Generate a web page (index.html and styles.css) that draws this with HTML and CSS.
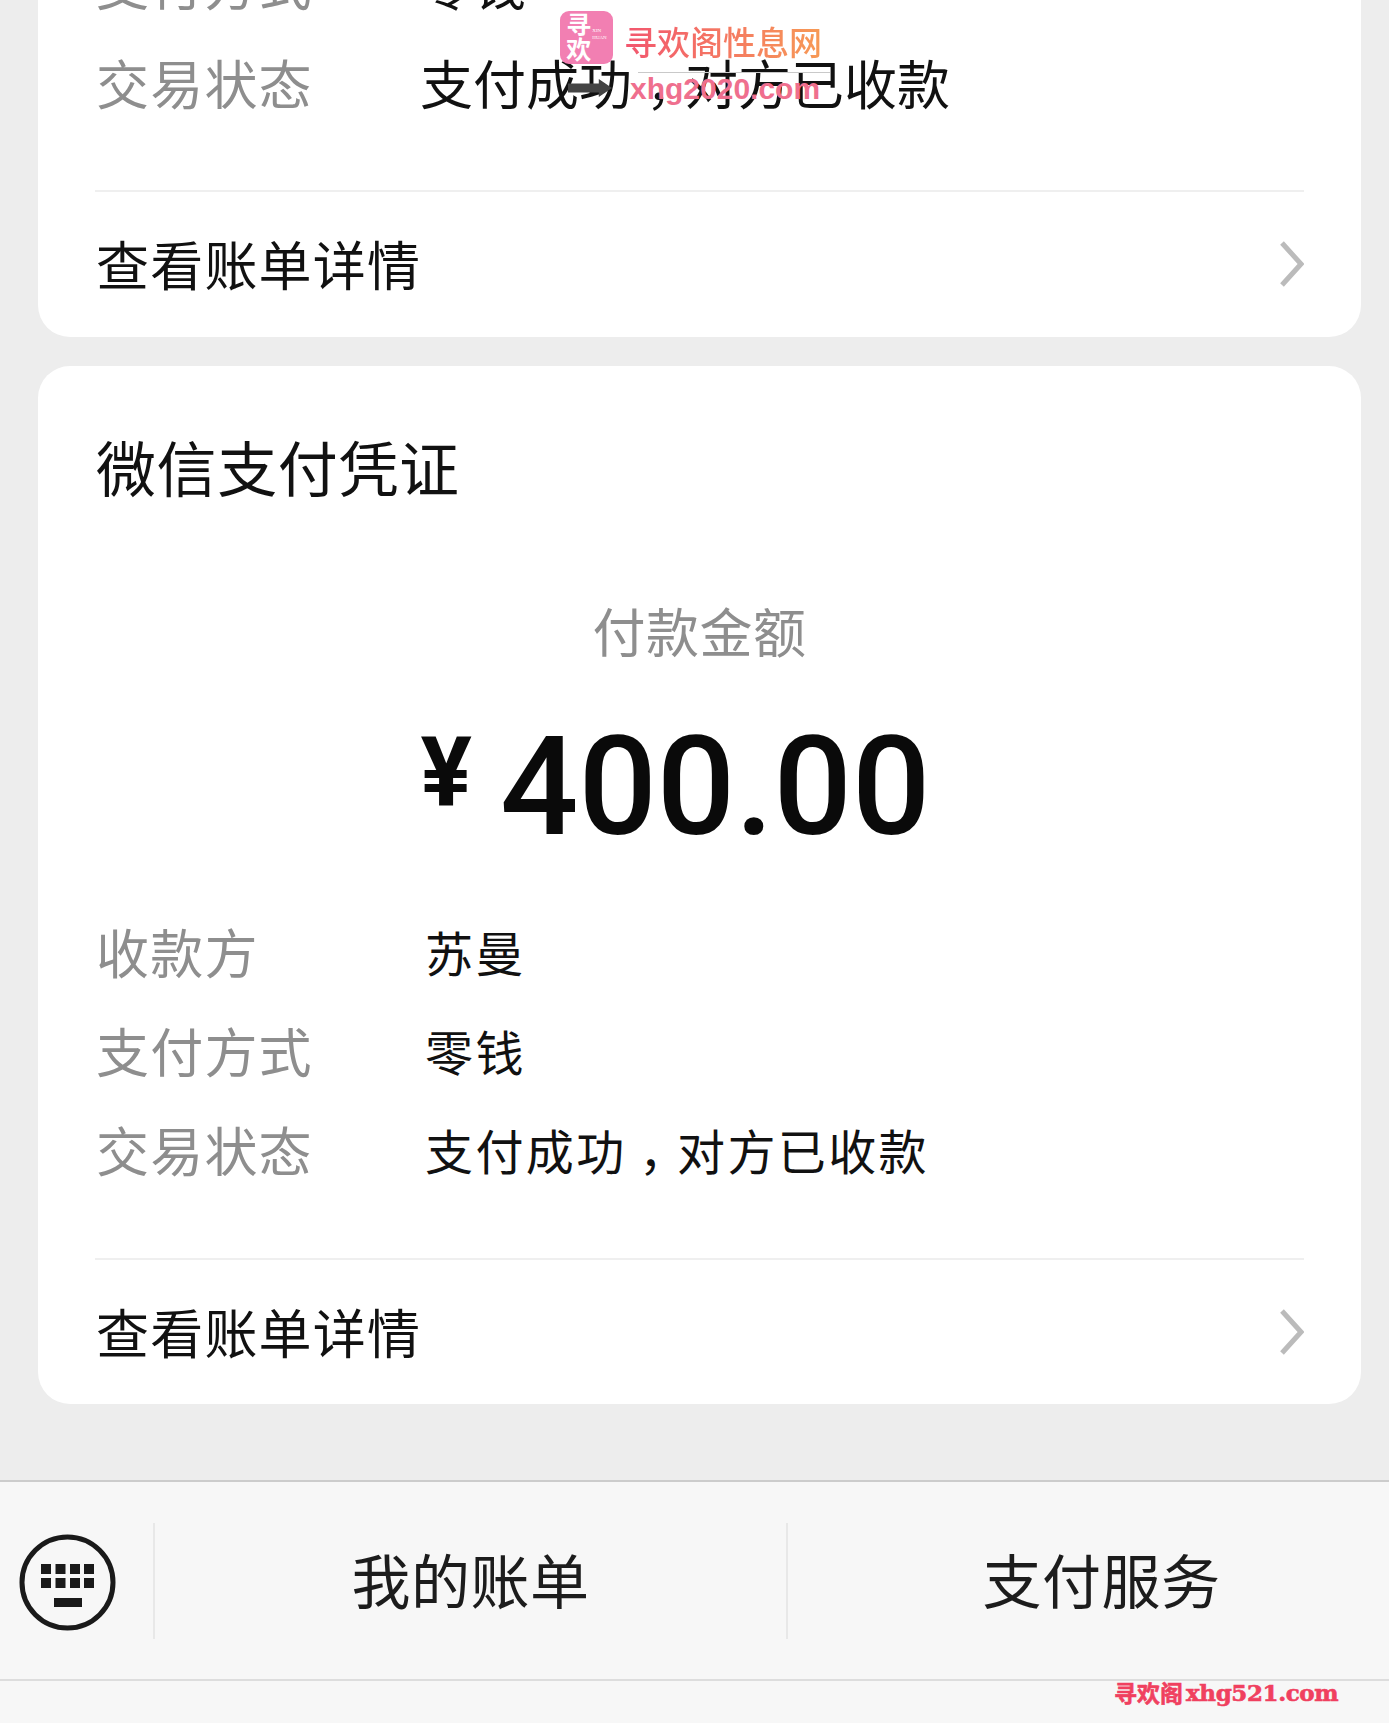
FILE: index.html
```html
<!DOCTYPE html>
<html lang="zh-CN">

<head>
  <meta charset="UTF-8" />
  <title>微信支付凭证</title>
  <link rel="stylesheet" href="styles.css">
</head>

<body>
  <div class="page">
    <!-- 上一张凭证，顶部被截断 -->
    <div class="card card-cut">
      <div class="row"><span class="label">支付方式</span><span class="value">零钱</span></div>
      <div class="row"><span class="label">交易状态</span><span class="value">支付成功<span class="comma">，</span>对方已收款</span></div>
      <div class="link">
        <span class="link-text">查看账单详情</span>
        <svg class="arrow" viewBox="0 0 24 46"><path d="M2 2 L21 23 L2 44" /></svg>
      </div>
    </div>

    <div class="card card-full">
      <div class="title">微信支付凭证</div>
      <div class="amount-label">付款金额</div>
      <div class="amount"><span class="yen">¥</span><span class="num">400.00</span></div>
      <div class="rows">
        <div class="row"><span class="label">收款方</span><span class="value small">苏曼</span></div>
        <div class="row"><span class="label">支付方式</span><span class="value small">零钱</span></div>
        <div class="row"><span class="label">交易状态</span><span class="value small">支付成功<span class="comma">，</span>对方已收款</span></div>
      </div>
      <div class="link">
        <span class="link-text">查看账单详情</span>
        <svg class="arrow" viewBox="0 0 24 46"><path d="M2 2 L21 23 L2 44" /></svg>
      </div>
    </div>

    <!-- 底部菜单 -->
    <div class="footer">
      <div class="keyboard">
        <svg viewBox="0 0 97 97" width="97" height="97">
          <circle cx="48.5" cy="48.5" r="45.5" fill="none" stroke="#1a1a1a" stroke-width="5" />
          <g fill="#1a1a1a">
            <rect x="22" y="30" width="10" height="10" />
            <rect x="36.500" y="30" width="10" height="10" />
            <rect x="51" y="30" width="10" height="10" />
            <rect x="65" y="30" width="10" height="10" />
            <rect x="22" y="44" width="10" height="10" />
            <rect x="36.500" y="44" width="10" height="10" />
            <rect x="51" y="44" width="10" height="10" />
            <rect x="65" y="44" width="10" height="10" />
            <rect x="35" y="64" width="28" height="9" />
          </g>
        </svg>
      </div>
      <div class="menu menu-bill">我的账单</div>
      <div class="menu menu-pay">支付服务</div>
    </div>
    <div class="footer-bottom"></div>

    <!-- 水印 -->
    <div class="mark">
      <div class="mark-logo">
        <span class="mark-logo-cn">寻<br>欢</span>
        <span class="mark-logo-en">XIN<br>HUAN</span>
      </div>
      <div class="mark-name">寻欢阁性息网</div>
      <div class="mark-line"></div>
      <div class="mark-arrow"></div>
      <div class="mark-url">xhg2020.com</div>
    </div>
    <div class="mark-bottom">寻欢阁<span>xhg521.com</span></div>
  </div>
</body>

</html>
```

FILE: styles.css
```css
* {
  margin: 0;
  padding: 0;
  box-sizing: border-box;
}

body {
  background: #ededed;
  font-family: "Noto Sans CJK SC", "Noto Sans", sans-serif;
}

.page {
  position: relative;
  width: 1389px;
  height: 1723px;
  overflow: hidden;
  display: flex;
  flex-direction: column;
}

.card {
  flex: none;
  width: 1323px;
  margin-left: 38px;
  background: #fff;
  border-radius: 32px;
  padding: 0 58px;
}

.card-cut {
  margin-top: -67px;
  height: 404px;
}

.card-full {
  margin-top: 29px;
  height: 1038px;
  padding-top: 60px;
}

.row {
  display: flex;
  align-items: center;
  height: 99px;
}

.label {
  width: 324px;
  flex: none;
  font-size: 53px;
  color: #8e8e8e;
  letter-spacing: 1.200px;
}

.value {
  font-size: 53px;
  color: #111;
}

.value.small {
  font-size: 48px;
  letter-spacing: 2.400px;
  margin-left: 5px;
}

/* 逗号往右挪一点 */
.comma {
  margin-left: 0.26em;
  margin-right: -0.26em;
}

.link {
  display: flex;
  justify-content: space-between;
  align-items: center;
  margin-left: -1px;
  margin-right: -1px;
  border-top: 2px solid #efefef;
  font-size: 53px;
  letter-spacing: 1.200px;
  color: #111;
  height: 146px;
}

.link-text {
  padding-bottom: 2px;
  padding-left: 1px;
}

.card-cut .link {
  margin-top: 59px;
}

.card-full .link {
  margin-top: 60px;
}

.arrow {
  width: 24px;
  height: 46px;
  flex: none;
}

.arrow path {
  fill: none;
  stroke: #bbb;
  stroke-width: 5;
}

.title {
  font-size: 60px;
  line-height: 80px;
  letter-spacing: 0.600px;
  color: #111;
}

.amount-label {
  margin-top: 89px;
  font-size: 53px;
  line-height: 70px;
  text-align: center;
  letter-spacing: 0.500px;
  color: #8e8e8e;
}

.amount {
  margin-top: 57px;
  display: flex;
  justify-content: center;
  align-items: flex-start;
  height: 130px;
  padding-right: 48px;
  color: #0a0a0a;
  font-family: Roboto, "Liberation Sans", sans-serif;
}

.yen {
  font-size: 96px;
  font-weight: 700;
  line-height: 100px;
  margin-right: 28px;
}

.num {
  font-size: 138px;
  font-weight: 500;
  line-height: 130px;
}

.rows {
  margin-top: 49px;
}

.footer {
  flex: none;
  display: flex;
  margin-top: 76px;
  height: 201px;
  background: #f7f7f7;
  border-top: 2px solid #ccc;
  border-bottom: 2px solid #ddd;
  align-items: center;
}

.keyboard {
  flex: none;
  width: 153px;
  padding-left: 19px;
  padding-top: 3px;
  display: flex;
}

.menu {
  height: 116px;
  border-left: 2px solid #e8e8e8;
  display: flex;
  align-items: center;
  justify-content: center;
  padding-bottom: 4px;
  font-size: 59px;
  letter-spacing: 0.500px;
  color: #1c1c1c;
}

.menu-bill {
  width: 633px;
}

.menu-pay {
  flex: 1;
  padding-left: 26px;
}

.footer-bottom {
  flex: 1;
  background: #f7f7f7;
}

/* 水印浮在内容上面 */
.mark {
  position: absolute;
  left: 560px;
  top: 11px;
  width: 280px;
  height: 100px;
}

.mark-logo {
  position: absolute;
  left: 0;
  top: 0;
  width: 53px;
  height: 53px;
  background: #f27fb2;
  border-radius: 9px;
  color: #fff;
  display: flex;
  justify-content: center;
  gap: 1px;
}

.mark-logo-cn {
  font-size: 25px;
  line-height: 25px;
  font-weight: 700;
}

.mark-logo-en {
  font-family: "Liberation Serif", serif;
  font-size: 5px;
  line-height: 7px;
  margin-top: 16px;
}

.mark-name {
  position: absolute;
  left: 64px;
  top: 12px;
  font-size: 33px;
  line-height: 36px;
  font-weight: 500;
  white-space: nowrap;
  color: transparent;
  background: linear-gradient(90deg, #f2566f, #f79a55);
  background-clip: text;
  -webkit-background-clip: text;
}

.mark-line {
  position: absolute;
  left: 78px;
  top: 61px;
  width: 192px;
  height: 1px;
  background: #c9c9c9;
}

.mark-arrow {
  position: absolute;
  left: 8px;
  top: 68px;
  width: 44px;
  height: 18px;
  background: #444;
  clip-path: polygon(0 25%, 70% 25%, 70% 0, 100% 50%, 70% 100%, 70% 75%, 0 75%);
}

.mark-url {
  position: absolute;
  left: 70px;
  top: 63px;
  font-family: "Liberation Sans", sans-serif;
  font-size: 30px;
  line-height: 30px;
  font-weight: 700;
  white-space: nowrap;
  color: #ef6f8e;
}

.mark-bottom {
  position: absolute;
  left: 1114px;
  top: 1679px;
  font-size: 23px;
  line-height: 27px;
  font-weight: 700;
  color: #f0405f;
  white-space: nowrap;
  display: flex;
  gap: 3px;
  -webkit-text-stroke: 0.6px #f0405f;
}

.mark-bottom span {
  font-family: "DejaVu Serif", serif;
  font-size: 23px;
  letter-spacing: -0.400px;
}
```
